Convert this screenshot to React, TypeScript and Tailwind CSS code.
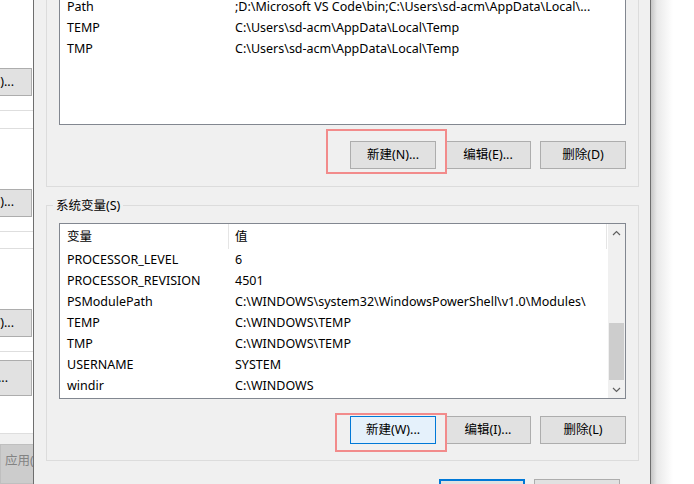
type Row = { name: string; value: string };

const userVars: Row[] = [
    { name: "Path", value: ";D:\\Microsoft VS Code\\bin;C:\\Users\\sd-acm\\AppData\\Local\\..." },
    { name: "TEMP", value: "C:\\Users\\sd-acm\\AppData\\Local\\Temp" },
    { name: "TMP", value: "C:\\Users\\sd-acm\\AppData\\Local\\Temp" },
];

const systemVars: Row[] = [
    { name: "PROCESSOR_LEVEL", value: "6" },
    { name: "PROCESSOR_REVISION", value: "4501" },
    { name: "PSModulePath", value: "C:\\WINDOWS\\system32\\WindowsPowerShell\\v1.0\\Modules\\" },
    { name: "TEMP", value: "C:\\WINDOWS\\TEMP" },
    { name: "TMP", value: "C:\\WINDOWS\\TEMP" },
    { name: "USERNAME", value: "SYSTEM" },
    { name: "windir", value: "C:\\WINDOWS" },
];

function VarRow({ row }: { row: Row }) {
    return (
        <div className="h-[21px] pt-[2px] flex items-center whitespace-nowrap">
            <div className="w-[169px] shrink-0 pl-[7px]">{row.name}</div>
            <div className="pl-[6px] overflow-hidden">{row.value}</div>
        </div>
    );
}

function Btn({ label, focused = false }: { label: string; focused?: boolean }) {
    return (
        <div
            className={
                focused
                    ? "w-[86px] h-[28px] border border-[#0078d7] bg-[#e5f1fb] flex items-center justify-center"
                    : "w-[86px] h-[28px] border border-[#adadad] bg-[#e1e1e1] flex items-center justify-center"
            }
        >
            {label}
        </div>
    );
}

function Chevron({ up }: { up: boolean }) {
    return (
        <svg width="9" height="6" viewBox="0 0 9 6">
            <polyline
                points={up ? "1,5 4.5,1.5 8,5" : "1,1 4.5,4.5 8,1"}
                fill="none"
                stroke="#606060"
                strokeWidth="1.2"
            />
        </svg>
    );
}

// window behind the dialog, only its right edge shows
function BackWindow() {
    const line = <div className="h-px bg-[#dedede]" />;
    const btn = (h: string, text: string, pr: string) => (
        <div className={`${h} -ml-[60px] w-[92px] shrink-0 border border-[#adadad] bg-[#e1e1e1] flex items-center justify-end ${pr}`}>
            {text}
        </div>
    );
    return (
        <div className="w-[33px] h-full shrink-0 bg-white flex flex-col overflow-hidden">
            <div className="h-[68px] shrink-0" />
            {btn("h-[28px]", "(E)...", "pr-[17px]")}
            <div className="h-[14px] shrink-0" />
            {line}
            <div className="h-[17px] shrink-0" />
            {line}
            <div className="h-[60px] shrink-0" />
            {btn("h-[28px]", "(N)...", "pr-[17px]")}
            <div className="h-[14px] shrink-0" />
            {line}
            <div className="h-[17px] shrink-0" />
            {line}
            <div className="h-[60px] shrink-0" />
            {btn("h-[28px]", "(V)...", "pr-[17px]")}
            <div className="h-[14px] shrink-0" />
            {line}
            <div className="h-[8px] shrink-0" />
            {btn("h-[36px]", "...", "pr-[23px]")}
            <div className="h-[37px] shrink-0" />
            {line}
            <div className="flex-1 bg-[#f0f0f0] pt-[10px]">
                <div className="h-[40px] w-[80px] border border-[#bfbfbf] bg-[#cccccc] text-[#838383] pl-[4px] pt-[7px] whitespace-nowrap">
                    应用(A)
                </div>
            </div>
        </div>
    );
}

export default function App() {
    return (
        <div className="w-[694px] h-[484px] overflow-hidden bg-white flex relative text-[12.5px] text-black font-['Noto_Sans','Noto_Sans_CJK_SC',sans-serif]">
            <BackWindow />

            {/* environment variables dialog */}
            <div className="w-[618px] h-full shrink-0 border-x border-[#6e6e6e] bg-[#f0f0f0] pl-[12px] pr-[11px] flex flex-col overflow-hidden">
                {/* user variables group, scrolled past its top */}
                <div className="-mt-[42px] pt-[11px] px-[12px] pb-[17px] border border-[#dcdcdc] shrink-0">
                    <div className="h-[155px] border border-[#828790] bg-white pt-[25px] overflow-hidden">
                        {userVars.map((r, i) => (
                            <VarRow key={i} row={r} />
                        ))}
                    </div>
                    <div className="mt-[16px] flex justify-end gap-[9px]">
                        <Btn label="新建(N)..." />
                        <Btn label="编辑(E)..." />
                        <Btn label="删除(D)" />
                    </div>
                </div>

                {/* system variables group */}
                <div className="relative mt-[18px] pt-[17px] px-[12px] pb-[16px] border border-[#dcdcdc] shrink-0">
                    <div className="absolute left-[6px] -top-[9px] px-[3px] bg-[#f0f0f0] leading-[17px]">
                        系统变量(S)
                    </div>
                    <div className="h-[176px] border border-[#828790] bg-white flex overflow-hidden">
                        <div className="flex-1 flex flex-col">
                            <div className="h-[25px] shrink-0 flex items-stretch">
                                <div className="w-[168px] pl-[7px] pt-px flex items-center">变量</div>
                                <div className="w-px bg-[#e5e5e5]" />
                                <div className="flex-1 pl-[6px] pt-px flex items-center">值</div>
                                <div className="w-px bg-[#e5e5e5]" />
                                <div className="w-px" />
                            </div>
                            {systemVars.map((r, i) => (
                                <VarRow key={i} row={r} />
                            ))}
                        </div>
                        <div className="w-[17px] shrink-0 bg-[#f0f0f0] flex flex-col">
                            <div className="h-[17px] flex items-center justify-center">
                                <Chevron up />
                            </div>
                            <div className="flex-1">
                                <div className="mt-[82px] h-[57px] mx-px bg-[#cdcdcd]" />
                            </div>
                            <div className="h-[17px] flex items-center justify-center">
                                <Chevron up={false} />
                            </div>
                        </div>
                    </div>
                    <div className="mt-[17px] flex justify-end gap-[9px]">
                        <Btn label="新建(W)..." focused />
                        <Btn label="编辑(I)..." />
                        <Btn label="删除(L)" />
                    </div>
                </div>

                <div className="mt-[18px] pr-[19px] flex justify-end gap-[9px] shrink-0">
                    <div className="w-[86px] h-[28px] border-2 border-[#0078d7] bg-[#e1e1e1] flex items-center justify-center">
                        确定
                    </div>
                    <div className="w-[86px] h-[28px] border border-[#adadad] bg-[#e1e1e1] flex items-center justify-center">
                        取消
                    </div>
                </div>
            </div>

            {/* drop shadow */}
            <div className="flex-1 h-full bg-[linear-gradient(to_right,#c6c6c6,#e9e9e9_6px,#ffffff_22px)]" />

            {/* annotation boxes */}
            <div className="absolute left-[326px] top-[129px] w-[121px] h-[45px] border-2 border-[#f28b8b]" />
            <div className="absolute left-[335px] top-[413px] w-[112px] h-[39px] border-2 border-[#f28b8b]" />
        </div>
    );
}
